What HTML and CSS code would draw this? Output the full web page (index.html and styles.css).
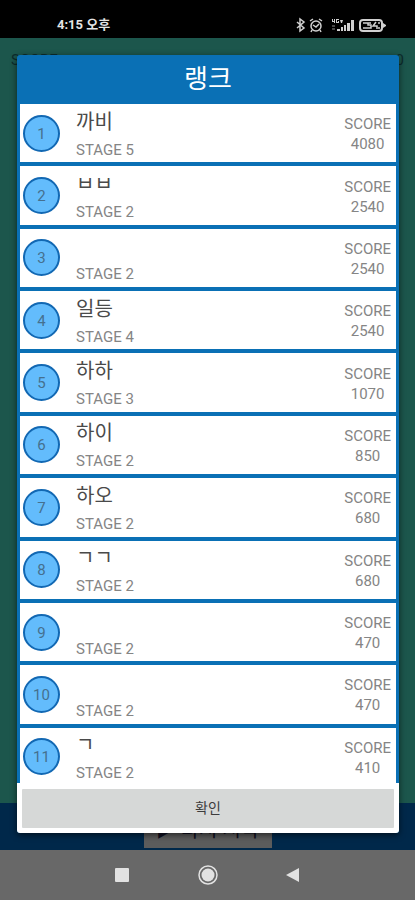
FILE: index.html
```html
<!DOCTYPE html>
<html lang="ko">
<head>
<meta charset="utf-8">
<meta name="viewport" content="width=device-width, initial-scale=1">
<title>랭크</title>
<link rel="stylesheet" href="styles.css">
</head>
<body>
<div class="screen">
  <header class="status">
    <span class="clock">4:15 오후</span>
    <svg class="status-icons" width="92" height="16" viewBox="0 0 92 16" fill="none" stroke="#d0d0d0" stroke-width="1.5" aria-hidden="true">
      <path d="M2 5l7 6-4 3V2l4 3-7 6"/>
      <circle cx="21" cy="9" r="5"/>
      <path d="M15 4l3-2M27 4l-3-2M18 8l3 2 3-3M17 13l-1 2M25 13l1 2"/>
      <g fill="#d0d0d0" stroke="none">
        <path d="M37 2h1v2h1V2h1v4h-1V5h-2zM41 2h3v1h-2v2h1V4h1v2h-3zM45 3h3l-1 3h-1z"/>
        <path opacity=".35" d="M37 8h3v2h-3zM37 11h3v2h-3z"/>
        <path d="M42 12h3v2h-3zM46 10h2v4h-2zM49 8h2v6h-2zM52 6h3v8h-3zM56 3h3v11h-3z"/>
        <path d="M88 6l3 2v1l-3 2z"/>
      </g>
      <rect x="65" y="3" width="22" height="11" rx="3" stroke-width="2"/>
      <path d="M68 6h5M68 11h5M76 6h-3v2h3v3h-4M81 5l-3 4h4v3M83 6h2M83 11h2"/>
    </svg>
  </header>

  <main class="game">
    <div class="game-top"><span>SCORE</span><span>0</span></div>
    <div class="game-bottom"><button class="game-button" type="button">▶ 다시 시작</button></div>

    <section class="dialog" role="dialog" aria-labelledby="rank-title">
      <h1 class="title" id="rank-title">랭크</h1>
      <div class="list-window">
        <ol class="list">
          <li class="row"><span class="badge">1</span><div class="player"><span class="name">까비</span><span class="stage">STAGE 5</span></div><div class="score"><span>SCORE</span><span>4080</span></div></li>
          <li class="row"><span class="badge">2</span><div class="player"><span class="name">ㅂㅂ</span><span class="stage">STAGE 2</span></div><div class="score"><span>SCORE</span><span>2540</span></div></li>
          <li class="row"><span class="badge">3</span><div class="player"><span class="name"></span><span class="stage">STAGE 2</span></div><div class="score"><span>SCORE</span><span>2540</span></div></li>
          <li class="row"><span class="badge">4</span><div class="player"><span class="name">일등</span><span class="stage">STAGE 4</span></div><div class="score"><span>SCORE</span><span>2540</span></div></li>
          <li class="row"><span class="badge">5</span><div class="player"><span class="name">하하</span><span class="stage">STAGE 3</span></div><div class="score"><span>SCORE</span><span>1070</span></div></li>
          <li class="row"><span class="badge">6</span><div class="player"><span class="name">하이</span><span class="stage">STAGE 2</span></div><div class="score"><span>SCORE</span><span>850</span></div></li>
          <li class="row"><span class="badge">7</span><div class="player"><span class="name">하오</span><span class="stage">STAGE 2</span></div><div class="score"><span>SCORE</span><span>680</span></div></li>
          <li class="row"><span class="badge">8</span><div class="player"><span class="name">ㄱㄱ</span><span class="stage">STAGE 2</span></div><div class="score"><span>SCORE</span><span>680</span></div></li>
          <li class="row"><span class="badge">9</span><div class="player"><span class="name"></span><span class="stage">STAGE 2</span></div><div class="score"><span>SCORE</span><span>470</span></div></li>
          <li class="row"><span class="badge">10</span><div class="player"><span class="name"></span><span class="stage">STAGE 2</span></div><div class="score"><span>SCORE</span><span>470</span></div></li>
          <li class="row"><span class="badge">11</span><div class="player"><span class="name">ㄱ</span><span class="stage">STAGE 2</span></div><div class="score"><span>SCORE</span><span>410</span></div></li>
        </ol>
      </div>
      <footer class="actions"><button class="confirm" type="button">확인</button></footer>
    </section>
  </main>

  <nav class="navbar" aria-label="시스템">
    <button class="nav-button" type="button" aria-label="최근 앱"><svg width="20" height="20" viewBox="0 0 20 20"><rect x="3" y="3" width="14" height="14" rx="1" fill="#e2e2e2"/></svg></button>
    <button class="nav-button" type="button" aria-label="홈"><svg width="20" height="20" viewBox="0 0 20 20"><circle cx="10" cy="10" r="9" fill="none" stroke="#e2e2e2" stroke-width="1.5"/><circle cx="10" cy="10" r="6.5" fill="#e2e2e2"/></svg></button>
    <button class="nav-button" type="button" aria-label="뒤로"><svg width="20" height="20" viewBox="0 0 20 20"><path d="M2 10L15 3v14z" fill="#e2e2e2"/></svg></button>
  </nav>
</div>
</body>
</html>
```
FILE: styles.css
```css
* { box-sizing: border-box; }

body {
  margin: 0;
  font-family: Roboto, "Noto Sans CJK KR", sans-serif;
  color: #858585;
}

button {
  border: 0;
  padding: 0;
  font-family: inherit;
}

.screen {
  display: flex;
  flex-direction: column;
  height: 100vh;
  background: #1c564c;
}

.status {
  display: flex;
  align-items: center;
  justify-content: space-between;
  height: 38px;
  padding: 12px 28px 0 57px;
  background: #000;
}

.clock {
  color: #e4e4e4;
  font-size: 13px;
  font-weight: 700;
  line-height: 20px;
}

.game {
  position: relative;
  display: flex;
  flex: 1;
  flex-direction: column;
  justify-content: space-between;
  min-height: 0;
}

.game-top {
  display: flex;
  justify-content: space-between;
  padding: 12px 11px;
  color: #0c2c2c;
  font-size: 15px;
  line-height: 20px;
}

.game-bottom {
  display: flex;
  align-items: flex-end;
  justify-content: center;
  height: 47px;
  padding-bottom: 2px;
  background: #00284a;
}

.game-button {
  width: 128px;
  height: 40px;
  background: #5c5c5c;
  color: #101020;
  font-size: 20px;
}

.dialog {
  position: absolute;
  inset: 17px 16px 17px 17px;
  display: flex;
  flex-direction: column;
  border-radius: 3px;
  background: #0a70b5;
  box-shadow: 0 2px 6px rgba(0, 0, 0, .6);
}

.title {
  margin: 0;
  color: #fff;
  font-size: 26px;
  font-weight: 400;
  line-height: 49px;
  text-align: center;
}

.list-window {
  display: flex;
  flex: 1;
  flex-direction: column;
  min-height: 0;
  padding: 0 3px;
  overflow: hidden;
}

.list {
  display: grid;
  flex: 1;
  grid-auto-rows: 1fr;
  gap: 4px;
  margin: 0 0 -3px;
  padding: 0;
  list-style: none;
}

.row {
  display: flex;
  align-items: center;
  padding: 0 5px 0 3px;
  background: #fff;
}

.badge {
  width: 37px;
  padding-top: 1px;
  border: 2px solid #1268b3;
  border-radius: 50%;
  background: #63bcfc;
  color: #45708f;
  font-size: 15px;
  line-height: 32px;
  text-align: center;
}

.player {
  display: flex;
  flex: 1;
  flex-direction: column;
  gap: 5px;
  padding: 2px 0 0 16px;
}

.name {
  height: 26px;
  color: #4a4a4a;
  font-size: 20px;
  line-height: 26px;
}

.stage {
  font-size: 15px;
  line-height: 20px;
}

.score {
  display: flex;
  flex-direction: column;
  align-items: center;
  padding-top: 2px;
  font-size: 15px;
  line-height: 20px;
}

.actions {
  padding: 6px 5px 5px;
  border-radius: 0 0 3px 3px;
  background: #fff;
}

.confirm {
  display: block;
  width: 100%;
  height: 39px;
  padding-bottom: 4px;
  border-radius: 1px;
  background: #d6d8d7;
  color: #3c3c3c;
  font-size: 14px;
}

.navbar {
  display: flex;
  align-items: center;
  justify-content: center;
  gap: 66px;
  height: 50px;
  background: #686868;
}

.nav-button {
  display: flex;
  background: transparent;
}
```
